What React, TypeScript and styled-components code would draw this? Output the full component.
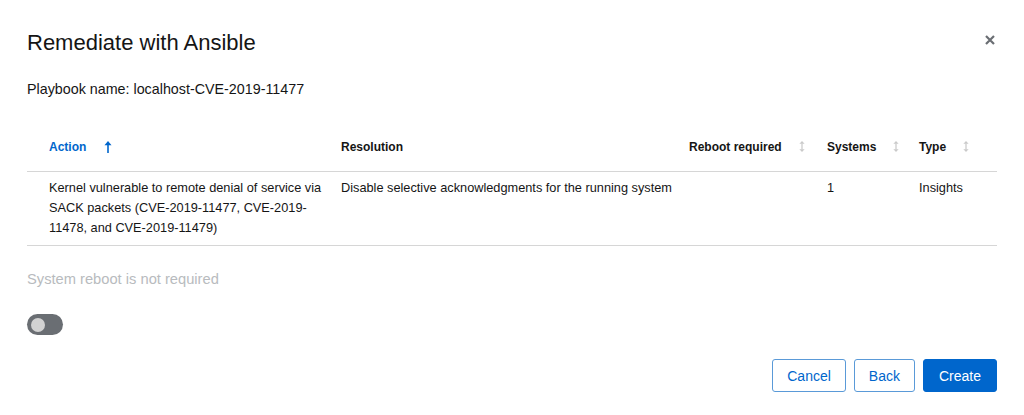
import React from "react";
import styled, { createGlobalStyle } from "styled-components";

const GlobalStyle = createGlobalStyle`
  html, body {
    margin: 0;
    padding: 0;
    background: #ffffff;
  }
  body {
    font-family: "Liberation Sans", Arial, sans-serif;
    color: #151515;
  }
  * { box-sizing: border-box; }
`;

const Modal = styled.div`
  width: 1024px;
  height: 415px;
  padding: 30px 27px 0;
  background: #ffffff;
  overflow: hidden;
`;

const Header = styled.header`
  display: flex;
  justify-content: space-between;
  align-items: flex-start;
`;

const Title = styled.h1`
  margin: 0;
  font-size: 22px;
  line-height: 26px;
  font-weight: 400;
  color: #151515;
`;

const CloseButton = styled.button`
  display: flex;
  align-items: center;
  justify-content: center;
  width: 10px;
  height: 10px;
  margin: 5px 2px 0 0;
  padding: 0;
  border: none;
  background: none;
  color: #6a6e73;
  cursor: pointer;
`;

const Playbook = styled.p`
  margin: 23px 0 0;
  font-size: 14.3px;
  line-height: 20px;
  color: #151515;
`;

const Table = styled.div`
  margin-top: 23px;
  width: 970px;
`;

const Row = styled.div<{ $head?: boolean }>`
  display: grid;
  grid-template-columns: 298px 348px 138px 92px 94px;
  align-items: ${(p) => (p.$head ? "center" : "start")};
  height: ${(p) => (p.$head ? "50px" : "auto")};
  padding: ${(p) => (p.$head ? "0" : "6px 0 7px")};
  border-bottom: 1px solid #d6d6d6;
`;

const HeadCell = styled.div<{ $first?: boolean; $active?: boolean }>`
  display: flex;
  align-items: center;
  padding-left: ${(p) => (p.$first ? "22px" : "16px")};
  font-size: 12px;
  line-height: 16px;
  font-weight: 700;
  color: ${(p) => (p.$active ? "#0066cc" : "#151515")};
  white-space: nowrap;
`;

const SortIcon = styled.span<{ $active?: boolean }>`
  display: inline-flex;
  margin-left: ${(p) => (p.$active ? "18px" : "17px")};
  color: ${(p) => (p.$active ? "#0066cc" : "#c9c9c9")};
`;

const Cell = styled.div<{ $first?: boolean }>`
  padding-left: ${(p) => (p.$first ? "22px" : "16px")};
  font-size: 12.75px;
  line-height: 20px;
  color: #151515;
`;

const Note = styled.p`
  margin: 23px 0 0;
  font-size: 14.7px;
  line-height: 20px;
  color: #b8bbbe;
`;

const Switch = styled.button`
  display: flex;
  align-items: center;
  width: 36px;
  height: 21px;
  margin-top: 25px;
  padding: 0 4px;
  border: none;
  border-radius: 10.5px;
  background: #6a6e73;
  cursor: pointer;
`;

const Knob = styled.span`
  width: 14px;
  height: 14px;
  border-radius: 50%;
  background: #d2d2d2;
`;

const Footer = styled.footer`
  display: flex;
  justify-content: flex-end;
  gap: 8px;
  margin-top: 24px;
`;

const Button = styled.button<{ $primary?: boolean }>`
  height: 33px;
  padding: 0 ${(p) => (p.$primary ? "15px" : "14px")};
  font-family: "Liberation Sans", Arial, sans-serif;
  font-size: 14px;
  line-height: 20px;
  border-radius: 3px;
  border: 1px solid ${(p) => (p.$primary ? "#0066cc" : "#5a9ad8")};
  background: ${(p) => (p.$primary ? "#0066cc" : "#ffffff")};
  color: ${(p) => (p.$primary ? "#ffffff" : "#0066cc")};
  cursor: pointer;
`;

const CloseIcon = () => (
  <svg width="10" height="10" viewBox="0 0 10 10" aria-hidden="true">
    <path d="M1 1 L9 9 M9 1 L1 9" stroke="currentColor" strokeWidth="2.2" strokeLinecap="butt" />
  </svg>
);

const SortUp = () => (
  <svg width="8" height="12" viewBox="0 0 8 12" aria-hidden="true">
    <polygon points="4,0 7.5,4.2 0.5,4.2" fill="currentColor" />
    <rect x="3.2" y="3.5" width="1.6" height="8.5" fill="currentColor" />
  </svg>
);

const SortBoth = () => (
  <svg width="6" height="11" viewBox="0 0 6 11" aria-hidden="true">
    <polygon points="3,0 5.6,2.8 0.4,2.8" fill="currentColor" />
    <polygon points="3,11 5.6,8.2 0.4,8.2" fill="currentColor" />
    <rect x="2.4" y="2.5" width="1.2" height="6" fill="currentColor" />
  </svg>
);

const columns = [
  { label: "Action", active: true },
  { label: "Resolution", sortable: false },
  { label: "Reboot required", sortable: true },
  { label: "Systems", sortable: true },
  { label: "Type", sortable: true },
];

export default function App() {
  return (
    <>
      <GlobalStyle />
      <Modal role="dialog" aria-label="Remediate with Ansible">
        <Header>
          <Title>Remediate with Ansible</Title>
          <CloseButton aria-label="Close">
            <CloseIcon />
          </CloseButton>
        </Header>
        <Playbook>Playbook name: localhost-CVE-2019-11477</Playbook>
        <Table role="table">
          <Row $head role="row">
            {columns.map((c, i) => (
              <HeadCell key={c.label} $first={i === 0} $active={c.active} role="columnheader">
                {c.label}
                {c.active && (
                  <SortIcon $active>
                    <SortUp />
                  </SortIcon>
                )}
                {c.sortable && (
                  <SortIcon>
                    <SortBoth />
                  </SortIcon>
                )}
              </HeadCell>
            ))}
          </Row>
          <Row role="row">
            <Cell $first role="cell">
              Kernel vulnerable to remote denial of service via SACK packets (CVE-2019-11477, CVE-2019-<wbr />11478, and CVE-2019-11479)
            </Cell>
            <Cell role="cell">Disable selective acknowledgments for the running system</Cell>
            <Cell role="cell"></Cell>
            <Cell role="cell">1</Cell>
            <Cell role="cell">Insights</Cell>
          </Row>
        </Table>
        <Note>System reboot is not required</Note>
        <Switch role="switch" aria-checked={false} aria-label="Auto reboot">
          <Knob />
        </Switch>
        <Footer>
          <Button>Cancel</Button>
          <Button>Back</Button>
          <Button $primary>Create</Button>
        </Footer>
      </Modal>
    </>
  );
}
